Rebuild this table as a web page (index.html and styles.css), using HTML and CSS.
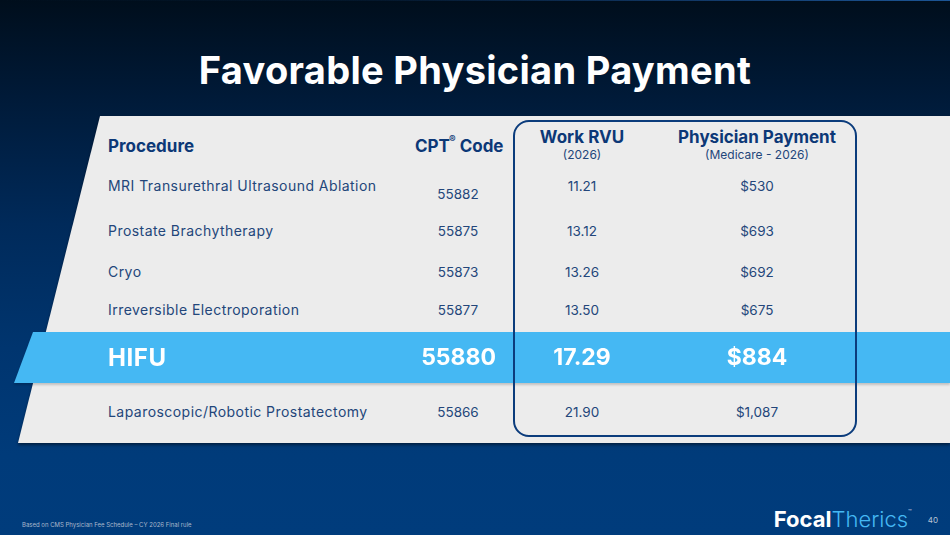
FILE: index.html
```html
<!DOCTYPE html>
<html lang="en">
<head>
<meta charset="utf-8">
<title>Favorable Physician Payment</title>
<link rel="stylesheet" href="styles.css">
</head>
<body>
<div class="slide">
  <div class="topline"></div>
  <h1 class="title">Favorable Physician Payment</h1>

  <div class="table-wrap">
    <div class="panel-bg"><div class="panel-shape"></div></div>

    <div class="row head">
      <div class="cell proc">Procedure</div>
      <div class="cell code">CPT<sup class="reg">®</sup> Code</div>
      <div class="cell num"><div class="hmain">Work RVU</div><div class="hsub">(2026)</div></div>
      <div class="cell num"><div class="hmain">Physician Payment</div><div class="hsub">(Medicare - 2026)</div></div>
    </div>

    <div class="row r1">
      <div class="cell proc">MRI Transurethral Ultrasound Ablation</div>
      <div class="cell code low">55882</div>
      <div class="cell num">11.21</div>
      <div class="cell num">$530</div>
    </div>

    <div class="row r2">
      <div class="cell proc">Prostate Brachytherapy</div>
      <div class="cell code">55875</div>
      <div class="cell num">13.12</div>
      <div class="cell num">$693</div>
    </div>

    <div class="row r3">
      <div class="cell proc">Cryo</div>
      <div class="cell code">55873</div>
      <div class="cell num">13.26</div>
      <div class="cell num">$692</div>
    </div>

    <div class="row r4">
      <div class="cell proc">Irreversible Electroporation</div>
      <div class="cell code">55877</div>
      <div class="cell num">13.50</div>
      <div class="cell num">$675</div>
    </div>

    <div class="band-wrap">
      <div class="row band">
        <div class="cell proc">HIFU</div>
        <div class="cell code">55880</div>
        <div class="cell num">17.29</div>
        <div class="cell num">$884</div>
      </div>
    </div>

    <div class="row r6">
      <div class="cell proc">Laparoscopic/Robotic Prostatectomy</div>
      <div class="cell code">55866</div>
      <div class="cell num">21.90</div>
      <div class="cell num">$1,087</div>
    </div>

    <div class="focus-box"></div>
  </div>

  <footer class="footer">
    <div class="source">Based on CMS Physician Fee Schedule – CY 2026 Final rule</div>
    <div class="brand">
      <div class="logo"><span class="focal">Focal</span><span class="therics">Therics</span><span class="tm">™</span></div>
      <div class="page">40</div>
    </div>
  </footer>
</div>
</body>
</html>
```

FILE: styles.css
```css
* { box-sizing: border-box; }

html, body {
  margin: 0;
  padding: 0;
}

body {
  width: 950px;
  height: 535px;
  overflow: hidden;
  font-family: "Inter", "Open Sans", "DejaVu Sans", sans-serif;
  background: linear-gradient(180deg, #000e1c 0%, #001a38 18%, #002a5a 42%, #00356f 65%, #003b7a 85%, #003c7c 100%);
}

.slide {
  width: 950px;
  height: 535px;
  display: flex;
  flex-direction: column;
}

.topline {
  height: 1px;
  background: linear-gradient(90deg, rgba(20,60,110,0) 0%, rgba(20,60,110,0.2) 40%, #123a6a 75%, #1c5595 100%);
}

.title {
  margin: 0;
  padding-top: 47px;
  height: 92px;
  line-height: 44px;
  text-align: center;
  color: #ffffff;
  font-size: 38px;
  font-weight: 700;
  letter-spacing: 0.3px;
}

.table-wrap {
  position: relative;
  isolation: isolate;
  margin-top: 23px;
  margin-left: 18px;
  width: 932px;
  height: 327px;
  padding-top: 10px;
}

.panel-bg {
  position: absolute;
  inset: 0;
  z-index: -1;
  filter: drop-shadow(0 2px 1.5px rgba(0, 0, 0, 0.45));
}

.panel-shape {
  width: 100%;
  height: 100%;
  background: #ececec;
  clip-path: polygon(82px 0, 100% 0, 100% 100%, 0 100%);
}

.row {
  display: grid;
  grid-template-columns: 307px 86px 162px 188px;
  padding-left: 90px;
  align-items: start;
  color: #23467a;
  font-size: 13.5px;
  line-height: 24px;
}

.cell { white-space: nowrap; }
.code, .num { text-align: center; }

.row .proc {
  font-size: 14px;
  letter-spacing: 0.45px;
}

.head {
  height: 40px;
  align-items: center;
  color: #0c3877;
  font-weight: 700;
  font-size: 17px;
}

.head .proc {
  font-size: 17px;
  letter-spacing: 0;
}

.head .code {
  text-align: right;
  padding-right: 2px;
}

.head .hmain {
  line-height: 18px;
  font-size: 17px;
}

.head .hsub {
  line-height: 18px;
  font-size: 12px;
  font-weight: 400;
  color: #23467a;
}

.reg {
  font-size: 10px;
  vertical-align: top;
  line-height: 12px;
  position: relative;
  top: -1px;
  margin-left: -1px;
}

.r1 { margin-top: 8px; }
.low { padding-top: 8px; }
.r2 { margin-top: 13px; }
.r3 { margin-top: 17px; }
.r4 { margin-top: 14px; }

.band-wrap {
  margin-top: 10px;
  margin-left: -4px;
  width: 936px;
  filter: drop-shadow(0 2px 1px rgba(0, 0, 0, 0.18));
}

.band {
  height: 51px;
  padding-left: 94px;
  align-items: center;
  background: #45b8f3;
  clip-path: polygon(19px 0, 100% 0, 100% 100%, 0 100%);
  color: #ffffff;
  font-weight: 700;
  font-size: 23px;
  line-height: 51px;
}

.band .proc {
  font-size: 24px;
  letter-spacing: 0.6px;
}

.band .code { text-align: right; padding-right: 5px; }

.r6 { margin-top: 17px; }

.focus-box {
  position: absolute;
  left: 495px;
  top: 4px;
  width: 344px;
  height: 317px;
  border: 2.5px solid #0b3c7c;
  border-radius: 16px;
  z-index: 2;
  pointer-events: none;
}

.footer {
  margin-top: auto;
  height: 32px;
  display: flex;
  justify-content: space-between;
  align-items: center;
  padding: 0 12px 0 22px;
}

.source {
  font-size: 6px;
  color: #aab8cc;
  padding-top: 10px;
}

.brand {
  display: flex;
  align-items: center;
  gap: 16px;
}

.logo {
  font-size: 22px;
  line-height: 24px;
}

.focal {
  color: #ffffff;
  font-weight: 700;
}

.therics {
  color: #45b8f3;
  font-weight: 300;
}

.tm {
  color: #cfd8e4;
  font-size: 6px;
  vertical-align: top;
  line-height: 10px;
}

.page {
  font-size: 8px;
  color: #b9c4d6;
  padding-top: 2px;
}
```
